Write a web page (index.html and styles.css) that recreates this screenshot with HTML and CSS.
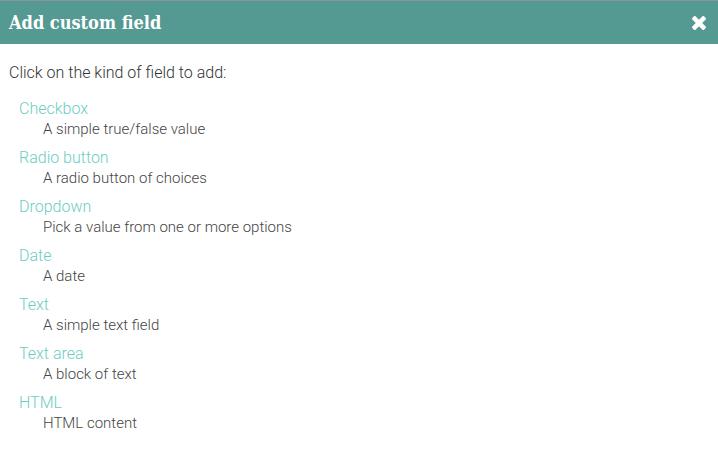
FILE: index.html
```html
<!DOCTYPE html>
<html>
<head>
<meta charset="utf-8">
<link rel="stylesheet" href="styles.css">
</head>
<body>
<div class="dialog">
  <div class="header">
    <h1 class="title">Add custom field</h1>
    <button class="close" aria-label="Close">
      <svg viewBox="302 366 1188 1188" width="14" height="14"><path fill="#fff" d="M1490 1322q0 40-28 68l-136 136q-28 28-68 28t-68-28l-294-294-294 294q-28 28-68 28t-68-28l-136-136q-28-28-28-68t28-68l294-294-294-294q-28-28-28-68t28-68l136-136q28-28 68-28t68 28l294 294 294-294q28-28 68-28t68 28l136 136q28 28 28 68t-28 68l-294 294 294 294q28 28 28 68z"/></svg>
    </button>
  </div>
  <div class="content">
    <p class="intro">Click on the kind of field to add:</p>
    <ul class="kinds">
      <li class="kind"><a class="kind-name" href="#">Checkbox</a><div class="kind-desc">A simple true/false value</div></li>
      <li class="kind"><a class="kind-name" href="#">Radio button</a><div class="kind-desc">A radio button of choices</div></li>
      <li class="kind"><a class="kind-name" href="#">Dropdown</a><div class="kind-desc">Pick a value from one or more options</div></li>
      <li class="kind"><a class="kind-name" href="#">Date</a><div class="kind-desc">A date</div></li>
      <li class="kind"><a class="kind-name" href="#">Text</a><div class="kind-desc">A simple text field</div></li>
      <li class="kind"><a class="kind-name" href="#">Text area</a><div class="kind-desc">A block of text</div></li>
      <li class="kind"><a class="kind-name" href="#">HTML</a><div class="kind-desc">HTML content</div></li>
    </ul>
  </div>
</div>
</body>
</html>
```
FILE: styles.css
```css
html, body {
  margin: 0;
  padding: 0;
  background: #fff;
}
body {
  font-family: Roboto, "Liberation Sans", sans-serif;
  font-weight: 300;
  font-size: 15px;
  color: #333;
}
.dialog {
  border-top: 1px solid #8b93a3;
}
.header {
  background: #559a92;
  height: 43px;
  display: flex;
  align-items: center;
  justify-content: space-between;
  padding: 0 12px 0 9px;
}
.title {
  margin: 0;
  font-family: "DejaVu Serif Condensed", "DejaVu Serif", "Liberation Serif", serif;
  font-stretch: condensed;
  font-weight: bold;
  font-size: 18px;
  color: #fff;
}
.close {
  background: none;
  border: 0;
  padding: 0;
  display: flex;
  cursor: pointer;
}
.content {
  padding: 19px 9px;
}
.intro {
  margin: 0 0 15px;
  font-size: 16px;
  line-height: 20px;
  color: #333;
}
.kinds {
  list-style: none;
  margin: 0;
  padding: 0 0 0 10px;
  display: flex;
  flex-direction: column;
  gap: 7px;
}
.kind-name {
  display: block;
  color: #6dcdc2;
  text-decoration: none;
  font-size: 16px;
  line-height: 21px;
}
.kind-desc {
  padding-left: 24px;
  line-height: 21px;
  color: #444;
}
```
